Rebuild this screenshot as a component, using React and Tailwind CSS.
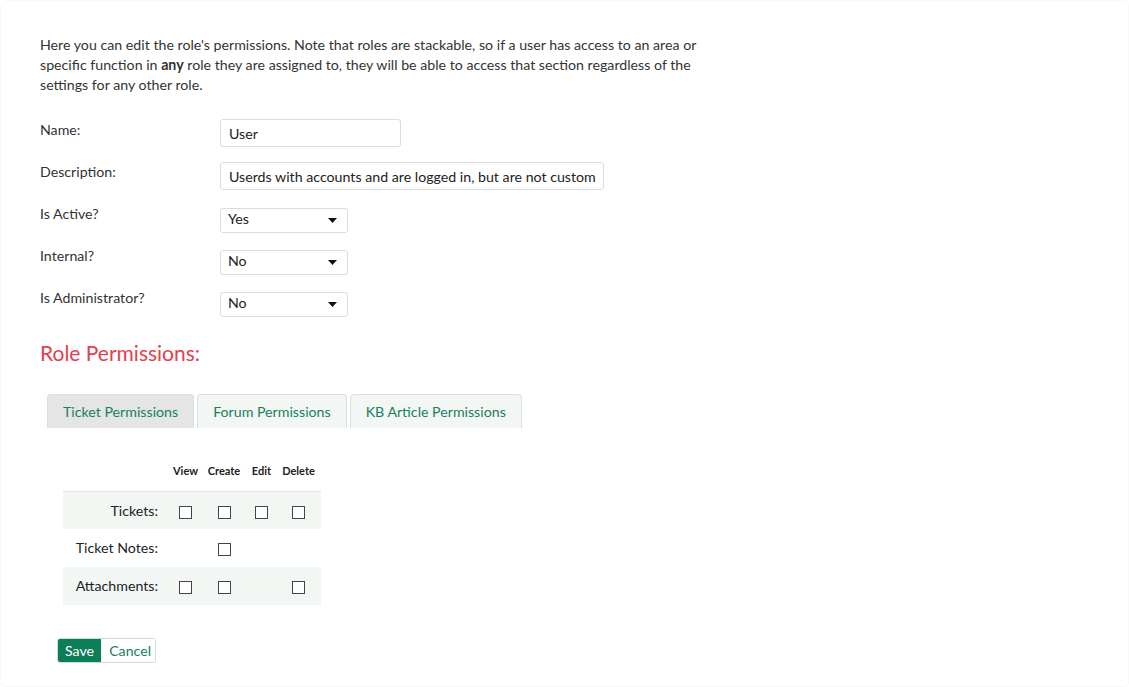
import { useState } from "react";

const font = { fontFamily: "Lato, 'Open Sans', sans-serif" };

function Caret() {
  return (
    <svg width="9" height="5" viewBox="0 0 9 5" className="absolute right-[10px] top-[9px]">
      <path d="M0 0h9L4.5 5z" fill="#111" />
    </svg>
  );
}

function SelectBox({ value }) {
  return (
    <div className="relative mt-[4px] h-[25px] w-[128px] rounded-[3px] border border-[#dcdcdc] bg-white pl-[7px] text-[14.2px] leading-[20px] text-[#222]">
      {value}
      <Caret />
    </div>
  );
}

function Box({ show = true }) {
  if (!show) return null;
  return <span className="inline-block h-[13px] w-[13px] border border-[#444] bg-white align-middle" />;
}

const rows = [
  { label: "Tickets:", cells: [true, true, true, true], shade: true },
  { label: "Ticket Notes:", cells: [false, true, false, false], shade: false },
  { label: "Attachments:", cells: [true, true, false, true], shade: true },
];

export default function App() {
  const [tab, setTab] = useState(0);
  const tabs = ["Ticket Permissions", "Forum Permissions", "KB Article Permissions"];

  return (
    <div className="min-h-[687px] bg-white" style={font}>
      <div className="min-h-[687px] rounded-[5px] border border-[#f9f9f9] pl-[39px] pt-[34px] text-[#333]">
        <p className="w-[690px] text-[14.2px] leading-[20px]">
          Here you can edit the role's permissions. Note that roles are stackable, so if a user has access to an area or
          specific function in <b>any</b> role they are assigned to, they will be able to access that section regardless of the
          settings for any other role.
        </p>

        <div className="mt-[25px] text-[14.2px]">
          <div className="flex h-[42px] items-start">
            <div className="w-[180px] leading-[20px]">Name:</div>
            <div className="mt-[-1px] h-[28px] w-[181px] rounded-[3px] border border-[#dcdcdc] pl-[8px] leading-[28px] text-[#222]">User</div>
          </div>
          <div className="flex h-[42px] items-start">
            <div className="w-[180px] leading-[20px]">Description:</div>
            <div className="h-[28px] w-[384px] whitespace-nowrap rounded-[3px] border border-[#dcdcdc] pl-[8px] leading-[28px] text-[#222]">
              Userds with accounts and are logged in, but are not custom
            </div>
          </div>
          <div className="flex h-[42px] items-start">
            <div className="w-[180px] leading-[20px]">Is Active?</div>
            <SelectBox value="Yes" />
          </div>
          <div className="flex h-[42px] items-start">
            <div className="w-[180px] leading-[20px]">Internal?</div>
            <SelectBox value="No" />
          </div>
          <div className="flex h-[42px] items-start">
            <div className="w-[180px] leading-[20px]">Is Administrator?</div>
            <SelectBox value="No" />
          </div>
        </div>

        <h2 className="mt-[10px] text-[21px] leading-[26px] text-[#e4404e]">Role Permissions:</h2>

        <div className="ml-[7px] mt-[28px] flex gap-[3px]">
          {tabs.map((t, i) => (
            <button
              key={t}
              onClick={() => setTab(i)}
              className={
                "h-[34px] rounded-t-[4px] border border-b-0 border-[#dedede] px-[15px] text-[14.2px] text-[#17805c] " +
                (tab === i ? "bg-[#e5e5e5]" : "bg-[#f3f7f4]")
              }
            >
              {t}
            </button>
          ))}
        </div>

        <table className="ml-[23px] mt-[29px] border-collapse text-[14.2px]">
          <thead>
            <tr className="h-[34px] border-b border-[#e4e4e4] text-[11px] font-bold leading-[14px] text-[#222]">
              <th className="w-[107px]"></th>
              <th className="w-[31px] pt-[7px] text-center align-top">View</th>
              <th className="w-[46px] pt-[7px] text-center align-top">Create</th>
              <th className="w-[29px] pt-[7px] text-center align-top">Edit</th>
              <th className="w-[45px] pt-[7px] text-center align-top">Delete</th>
            </tr>
          </thead>
          <tbody>
            {rows.map((r) => (
              <tr key={r.label} className={"h-[38px] " + (r.shade ? "bg-[#f3f7f4]" : "bg-white")}>
                <td className="pr-[12px] text-right text-[#222]">{r.label}</td>
                {r.cells.map((c, j) => (
                  <td key={j} className="text-center">
                    <Box show={c} />
                  </td>
                ))}
              </tr>
            ))}
          </tbody>
        </table>

        <div className="ml-[17px] mt-[33px] flex h-[25px] w-[99px] overflow-hidden rounded-[3px] border border-[#d8d8d8] text-[14.2px]">
          <button className="bg-[#0b7d57] px-[7px] text-white">Save</button>
          <button className="bg-white px-[8px] text-[#17805c]">Cancel</button>
        </div>
      </div>
    </div>
  );
}
